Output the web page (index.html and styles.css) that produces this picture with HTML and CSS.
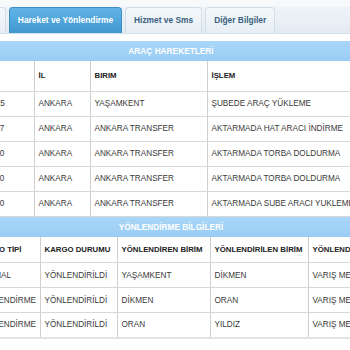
FILE: index.html
```html
<!DOCTYPE html>
<html lang="tr">
<head>
    <meta charset="UTF-8" />
    <link rel="stylesheet" href="styles.css">
    <title>Kargo Detay</title>
</head>
<body>
    <div class="tabs">
        <a class="tab edge"></a>
        <a class="tab active">Hareket ve Yönlendirme</a>
        <a class="tab">Hizmet ve Sms</a>
        <a class="tab">Diğer Bilgiler</a>
    </div>

    <div class="panel">
        <div class="inner">
            <div class="bar">ARAÇ HAREKETLERİ</div>
            <table class="grid moves">
                <colgroup>
                    <col style="width: 66px">
                    <col style="width: 56px">
                    <col style="width: 117px">
                    <col>
                </colgroup>
                <tr class="head">
                    <th>SAAT</th>
                    <th>İL</th>
                    <th>BIRIM</th>
                    <th>İŞLEM</th>
                </tr>
                <tr>
                    <td>10:42:15</td>
                    <td>ANKARA</td>
                    <td>YAŞAMKENT</td>
                    <td>ŞUBEDE ARAÇ YÜKLEME</td>
                </tr>
                <tr>
                    <td>11:05:27</td>
                    <td>ANKARA</td>
                    <td>ANKARA TRANSFER</td>
                    <td>AKTARMADA HAT ARACI İNDİRME</td>
                </tr>
                <tr>
                    <td>11:20:10</td>
                    <td>ANKARA</td>
                    <td>ANKARA TRANSFER</td>
                    <td>AKTARMADA TORBA DOLDURMA</td>
                </tr>
                <tr>
                    <td>11:21:30</td>
                    <td>ANKARA</td>
                    <td>ANKARA TRANSFER</td>
                    <td>AKTARMADA TORBA DOLDURMA</td>
                </tr>
                <tr>
                    <td>11:22:40</td>
                    <td>ANKARA</td>
                    <td>ANKARA TRANSFER</td>
                    <td>AKTARMADA SUBE ARACI YUKLEME</td>
                </tr>
            </table>

            <div class="bar">YÖNLENDİRME BİLGİLERİ</div>
            <table class="grid routes">
                <colgroup>
                    <col style="width: 72px">
                    <col style="width: 77px">
                    <col style="width: 93px">
                    <col style="width: 98px">
                    <col>
                </colgroup>
                <tr class="head">
                    <th>KARGO TİPİ</th>
                    <th>KARGO DURUMU</th>
                    <th>YÖNLENDİREN BİRİM</th>
                    <th>YÖNLENDİRİLEN BİRİM</th>
                    <th>YÖNLENDİRME NEDENİ</th>
                </tr>
                <tr>
                    <td>NORMAL</td>
                    <td>YÖNLENDİRİLDİ</td>
                    <td>YAŞAMKENT</td>
                    <td>DİKMEN</td>
                    <td>VARIŞ MERKEZİ</td>
                </tr>
                <tr>
                    <td>YÖNLENDİRME</td>
                    <td>YÖNLENDİRİLDİ</td>
                    <td>DİKMEN</td>
                    <td>ORAN</td>
                    <td>VARIŞ MERKEZİ</td>
                </tr>
                <tr>
                    <td>YÖNLENDİRME</td>
                    <td>YÖNLENDİRİLDİ</td>
                    <td>ORAN</td>
                    <td>YILDIZ</td>
                    <td>VARIŞ MERKEZİ</td>
                </tr>
            </table>
        </div>
    </div>
</body>
</html>
```

FILE: styles.css
```css
* {
    box-sizing: border-box;
}

body {
    margin: 0;
    background-color: #fff;
    font-family: "Liberation Sans", Arial, sans-serif;
    color: #333;
    overflow: hidden;
}

.tabs {
    display: flex;
    align-items: flex-end;
    gap: 3px;
    height: 34px;
    padding-top: 7px;
    background: linear-gradient(#f7f9fb 0, #f7f9fb 6px, #eef3f8 7px, #e3ebf2 100%);
    border-bottom: 1px solid #d6e0e8;
    margin-left: -6px;
}

.tab {
    display: block;
    height: 26px;
    line-height: 25px;
    padding: 0 8px;
    font-size: 8.4px;
    font-weight: bold;
    color: #3b5f80;
    background: linear-gradient(#f4f8fb, #e6eef5);
    border: 1px solid #d3dde6;
    border-bottom: none;
    border-radius: 4px 4px 0 0;
    white-space: nowrap;
}

.tab.edge {
    width: 12px;
    padding: 0;
}

.tab.active {
    color: #fff;
    background: linear-gradient(#62b4e6, #3f97cf);
    border-color: #3b8fc6;
    padding: 0;
    width: 113px;
    text-align: center;
}

.panel {
    padding-top: 7px;
    overflow: hidden;
}

.inner {
    width: 406px;
    margin-left: -32px;
}

.bar {
    height: 20px;
    line-height: 20px;
    text-align: center;
    font-size: 8.3px;
    font-weight: bold;
    color: #fff;
    background: linear-gradient(#a9d6f8, #9acdf4);
}

.grid {
    width: 100%;
    table-layout: fixed;
    border-collapse: collapse;
    font-size: 8.2px;
}

.grid th, .grid td {
    text-align: left;
    padding: 0 4px;
    white-space: nowrap;
    overflow: hidden;
    border-left: 1px solid #cfcfcf;
    border-bottom: 1px solid #d8d8d8;
}

.grid th:first-child, .grid td:first-child {
    border-left: none;
}

.moves th:first-child, .moves td:first-child {
    padding-left: 5px;
}

.routes th:first-child, .routes td:first-child {
    padding-left: 8px;
}

.grid th {
    font-size: 7.8px;
    font-weight: bold;
    color: #222;
}

.grid td {
    height: 25px;
    color: #3a3a3a;
}

.moves .head th {
    height: 30px;
}

.routes .head th {
    height: 26px;
}

.routes tr:last-child td {
    border-bottom: 2px solid #e3e3e3;
}
```
